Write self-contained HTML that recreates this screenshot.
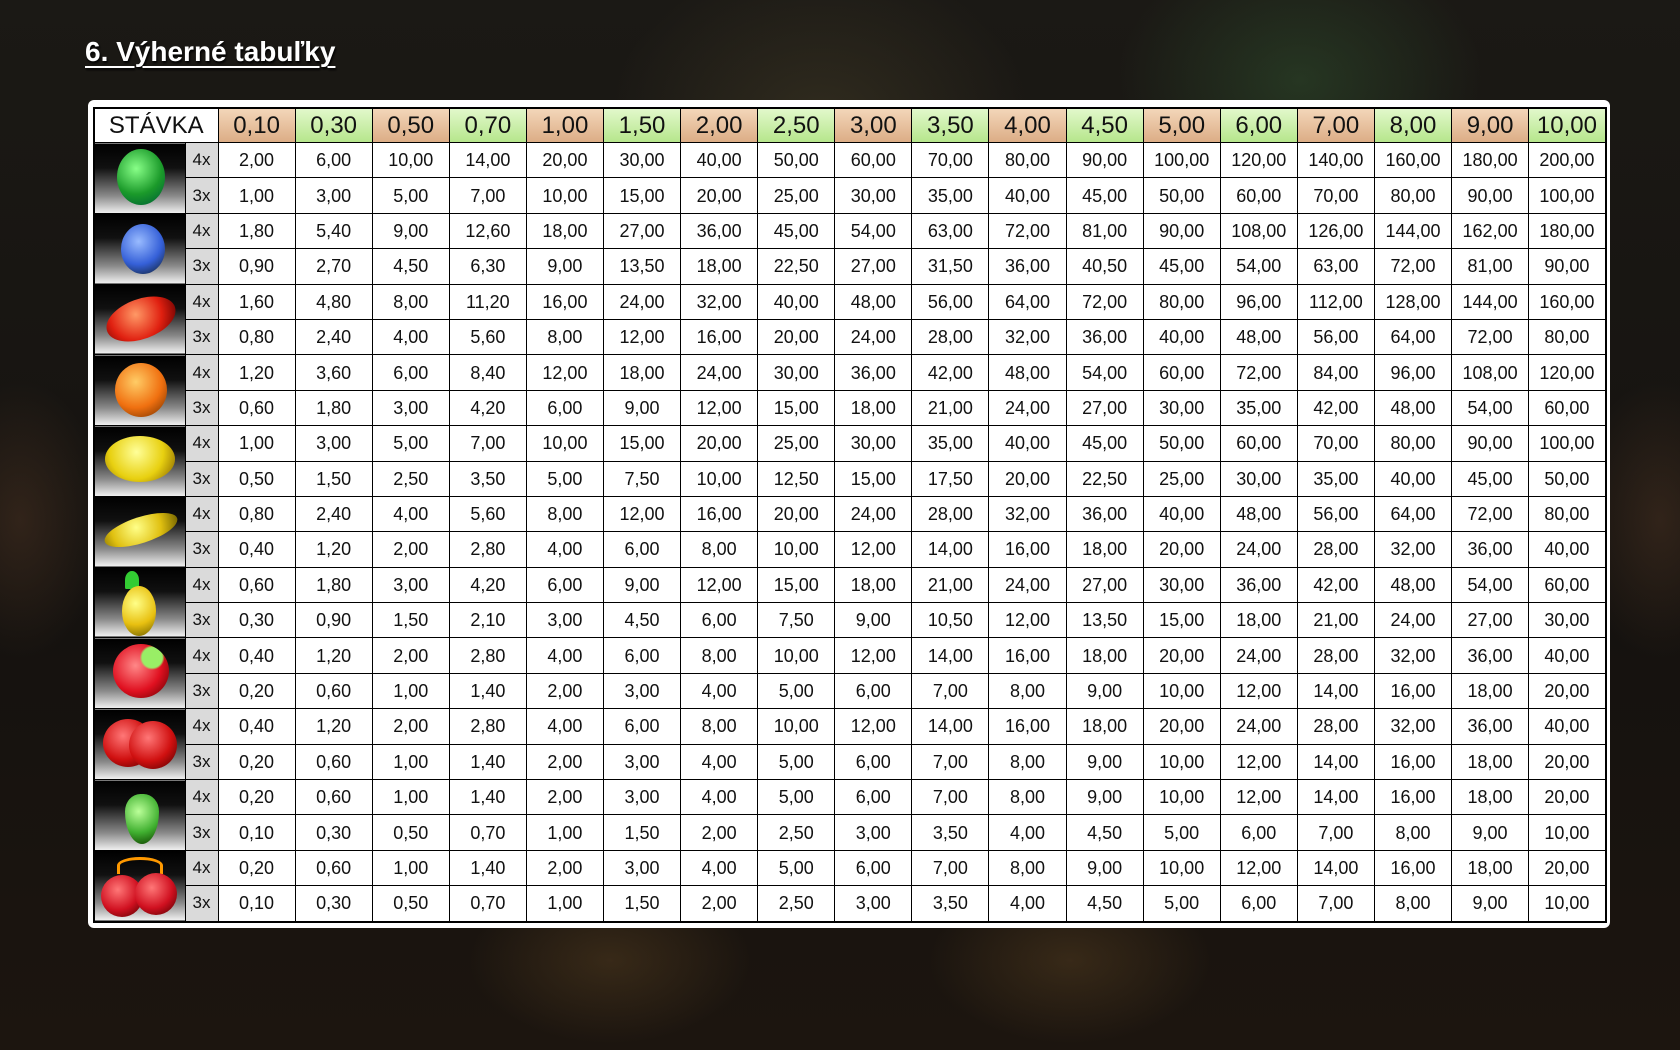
<!DOCTYPE html>
<html><head><meta charset="utf-8">
<style>
html,body{margin:0;padding:0}
body{width:1680px;height:1050px;overflow:hidden;position:relative;font-family:"Liberation Sans",sans-serif;
background:
radial-gradient(ellipse 260px 200px at 1300px 80px,rgba(60,110,60,.35),transparent 70%),
radial-gradient(ellipse 300px 230px at 820px 120px,rgba(90,80,50,.35),transparent 70%),
radial-gradient(ellipse 200px 120px at 610px 960px,rgba(110,80,40,.35),transparent 70%),
radial-gradient(ellipse 200px 120px at 1070px 960px,rgba(110,80,40,.35),transparent 70%),
radial-gradient(ellipse 120px 200px at 20px 520px,rgba(90,60,40,.4),transparent 70%),
radial-gradient(ellipse 120px 200px at 1660px 520px,rgba(90,60,40,.4),transparent 70%),
linear-gradient(#1b1915,#15120f 60%,#1c150f);}
.title{position:absolute;left:85px;top:36px;color:#fff;font-weight:bold;font-size:28px;text-decoration:underline;text-decoration-thickness:2px;text-underline-offset:5px;text-shadow:1px 2px 2px #000}
.panel{position:absolute;left:88px;top:100px;width:1522px;height:828px;background:#fff;border-radius:6px}
table{position:absolute;left:93px;top:107px;border-collapse:collapse;table-layout:fixed;width:1512px;border:2px solid #000}
td{border:1px solid #000;padding:0;text-align:center;font-size:18px;color:#111;height:34.4px;line-height:20px;white-space:nowrap;overflow:hidden}
tr.h td{height:33px;font-size:24px}
td.st{text-align:center;font-size:23px;background:#fff}
td.t{background:linear-gradient(#f3d6b9,#dcad86)}
td.g{background:linear-gradient(#e2f8cb,#b6e68c)}
td.m{background:#dadada;font-size:17px}
td.f{background:linear-gradient(#000 0%,#111 35%,#8a8a8a 75%,#f2f2f2);position:relative;padding:0}
.fr{position:absolute;border-radius:50%}
</style></head><body>
<div class="title">6. Výherné tabuľky</div>
<div class="panel"></div>
<table>
<colgroup><col style="width:91px"><col style="width:33px"><col span="18" style="width:77.1px"></colgroup>
<tr class="h"><td colspan="2" class="st">STÁVKA</td><td class="t">0,10</td><td class="g">0,30</td><td class="t">0,50</td><td class="g">0,70</td><td class="t">1,00</td><td class="g">1,50</td><td class="t">2,00</td><td class="g">2,50</td><td class="t">3,00</td><td class="g">3,50</td><td class="t">4,00</td><td class="g">4,50</td><td class="t">5,00</td><td class="g">6,00</td><td class="t">7,00</td><td class="g">8,00</td><td class="t">9,00</td><td class="g">10,00</td></tr>

<tr><td rowspan="2" class="f"><div class="fr" style="left:22px;top:6px;width:48px;height:56px;background:radial-gradient(circle at 40% 35%,#8f8,#1b9a2a 55%,#063 90%)"></div></td><td class="m">4x</td><td>2,00</td><td>6,00</td><td>10,00</td><td>14,00</td><td>20,00</td><td>30,00</td><td>40,00</td><td>50,00</td><td>60,00</td><td>70,00</td><td>80,00</td><td>90,00</td><td>100,00</td><td>120,00</td><td>140,00</td><td>160,00</td><td>180,00</td><td>200,00</td></tr>
<tr><td class="m">3x</td><td>1,00</td><td>3,00</td><td>5,00</td><td>7,00</td><td>10,00</td><td>15,00</td><td>20,00</td><td>25,00</td><td>30,00</td><td>35,00</td><td>40,00</td><td>45,00</td><td>50,00</td><td>60,00</td><td>70,00</td><td>80,00</td><td>90,00</td><td>100,00</td></tr>

<tr><td rowspan="2" class="f"><div class="fr" style="left:26px;top:10px;width:44px;height:50px;background:radial-gradient(circle at 40% 35%,#9bf,#3560d8 55%,#123 95%)"></div></td><td class="m">4x</td><td>1,80</td><td>5,40</td><td>9,00</td><td>12,60</td><td>18,00</td><td>27,00</td><td>36,00</td><td>45,00</td><td>54,00</td><td>63,00</td><td>72,00</td><td>81,00</td><td>90,00</td><td>108,00</td><td>126,00</td><td>144,00</td><td>162,00</td><td>180,00</td></tr>
<tr><td class="m">3x</td><td>0,90</td><td>2,70</td><td>4,50</td><td>6,30</td><td>9,00</td><td>13,50</td><td>18,00</td><td>22,50</td><td>27,00</td><td>31,50</td><td>36,00</td><td>40,50</td><td>45,00</td><td>54,00</td><td>63,00</td><td>72,00</td><td>81,00</td><td>90,00</td></tr>

<tr><td rowspan="2" class="f"><div class="fr" style="left:10px;top:14px;width:72px;height:40px;background:radial-gradient(circle at 45% 35%,#f96,#e02010 55%,#600 95%);transform:rotate(-20deg)"></div></td><td class="m">4x</td><td>1,60</td><td>4,80</td><td>8,00</td><td>11,20</td><td>16,00</td><td>24,00</td><td>32,00</td><td>40,00</td><td>48,00</td><td>56,00</td><td>64,00</td><td>72,00</td><td>80,00</td><td>96,00</td><td>112,00</td><td>128,00</td><td>144,00</td><td>160,00</td></tr>
<tr><td class="m">3x</td><td>0,80</td><td>2,40</td><td>4,00</td><td>5,60</td><td>8,00</td><td>12,00</td><td>16,00</td><td>20,00</td><td>24,00</td><td>28,00</td><td>32,00</td><td>36,00</td><td>40,00</td><td>48,00</td><td>56,00</td><td>64,00</td><td>72,00</td><td>80,00</td></tr>

<tr><td rowspan="2" class="f"><div class="fr" style="left:20px;top:8px;width:52px;height:54px;background:radial-gradient(circle at 40% 35%,#fc6,#f07010 55%,#730 95%)"></div></td><td class="m">4x</td><td>1,20</td><td>3,60</td><td>6,00</td><td>8,40</td><td>12,00</td><td>18,00</td><td>24,00</td><td>30,00</td><td>36,00</td><td>42,00</td><td>48,00</td><td>54,00</td><td>60,00</td><td>72,00</td><td>84,00</td><td>96,00</td><td>108,00</td><td>120,00</td></tr>
<tr><td class="m">3x</td><td>0,60</td><td>1,80</td><td>3,00</td><td>4,20</td><td>6,00</td><td>9,00</td><td>12,00</td><td>15,00</td><td>18,00</td><td>21,00</td><td>24,00</td><td>27,00</td><td>30,00</td><td>35,00</td><td>42,00</td><td>48,00</td><td>54,00</td><td>60,00</td></tr>

<tr><td rowspan="2" class="f"><div class="fr" style="left:10px;top:10px;width:70px;height:46px;background:radial-gradient(circle at 45% 35%,#ff9,#e8d010 55%,#860 95%)"></div></td><td class="m">4x</td><td>1,00</td><td>3,00</td><td>5,00</td><td>7,00</td><td>10,00</td><td>15,00</td><td>20,00</td><td>25,00</td><td>30,00</td><td>35,00</td><td>40,00</td><td>45,00</td><td>50,00</td><td>60,00</td><td>70,00</td><td>80,00</td><td>90,00</td><td>100,00</td></tr>
<tr><td class="m">3x</td><td>0,50</td><td>1,50</td><td>2,50</td><td>3,50</td><td>5,00</td><td>7,50</td><td>10,00</td><td>12,50</td><td>15,00</td><td>17,50</td><td>20,00</td><td>22,50</td><td>25,00</td><td>30,00</td><td>35,00</td><td>40,00</td><td>45,00</td><td>50,00</td></tr>

<tr><td rowspan="2" class="f"><div class="fr" style="left:8px;top:20px;width:76px;height:26px;background:radial-gradient(circle at 45% 35%,#ff8,#e0c010 55%,#760 95%);transform:rotate(-18deg)"></div></td><td class="m">4x</td><td>0,80</td><td>2,40</td><td>4,00</td><td>5,60</td><td>8,00</td><td>12,00</td><td>16,00</td><td>20,00</td><td>24,00</td><td>28,00</td><td>32,00</td><td>36,00</td><td>40,00</td><td>48,00</td><td>56,00</td><td>64,00</td><td>72,00</td><td>80,00</td></tr>
<tr><td class="m">3x</td><td>0,40</td><td>1,20</td><td>2,00</td><td>2,80</td><td>4,00</td><td>6,00</td><td>8,00</td><td>10,00</td><td>12,00</td><td>14,00</td><td>16,00</td><td>18,00</td><td>20,00</td><td>24,00</td><td>28,00</td><td>32,00</td><td>36,00</td><td>40,00</td></tr>

<tr><td rowspan="2" class="f"><div class="fr" style="left:30px;top:3px;width:14px;height:18px;background:#3c3;border-radius:50% 50% 10% 10%"></div><div class="fr" style="left:27px;top:18px;width:34px;height:50px;background:radial-gradient(circle at 40% 35%,#ff8,#e8c010 55%,#760 95%)"></div></td><td class="m">4x</td><td>0,60</td><td>1,80</td><td>3,00</td><td>4,20</td><td>6,00</td><td>9,00</td><td>12,00</td><td>15,00</td><td>18,00</td><td>21,00</td><td>24,00</td><td>27,00</td><td>30,00</td><td>36,00</td><td>42,00</td><td>48,00</td><td>54,00</td><td>60,00</td></tr>
<tr><td class="m">3x</td><td>0,30</td><td>0,90</td><td>1,50</td><td>2,10</td><td>3,00</td><td>4,50</td><td>6,00</td><td>7,50</td><td>9,00</td><td>10,50</td><td>12,00</td><td>13,50</td><td>15,00</td><td>18,00</td><td>21,00</td><td>24,00</td><td>27,00</td><td>30,00</td></tr>

<tr><td rowspan="2" class="f"><div class="fr" style="left:18px;top:6px;width:56px;height:54px;background:radial-gradient(circle at 70% 25%,#9e6 0,#9e6 18%,transparent 22%),radial-gradient(circle at 40% 40%,#f88,#e01020 55%,#600 95%)"></div></td><td class="m">4x</td><td>0,40</td><td>1,20</td><td>2,00</td><td>2,80</td><td>4,00</td><td>6,00</td><td>8,00</td><td>10,00</td><td>12,00</td><td>14,00</td><td>16,00</td><td>18,00</td><td>20,00</td><td>24,00</td><td>28,00</td><td>32,00</td><td>36,00</td><td>40,00</td></tr>
<tr><td class="m">3x</td><td>0,20</td><td>0,60</td><td>1,00</td><td>1,40</td><td>2,00</td><td>3,00</td><td>4,00</td><td>5,00</td><td>6,00</td><td>7,00</td><td>8,00</td><td>9,00</td><td>10,00</td><td>12,00</td><td>14,00</td><td>16,00</td><td>18,00</td><td>20,00</td></tr>

<tr><td rowspan="2" class="f"><div class="fr" style="left:8px;top:10px;width:50px;height:48px;background:radial-gradient(circle at 40% 35%,#f77,#d01010 55%,#500 95%)"></div><div class="fr" style="left:34px;top:12px;width:48px;height:48px;background:radial-gradient(circle at 40% 35%,#f77,#d01010 55%,#500 95%)"></div></td><td class="m">4x</td><td>0,40</td><td>1,20</td><td>2,00</td><td>2,80</td><td>4,00</td><td>6,00</td><td>8,00</td><td>10,00</td><td>12,00</td><td>14,00</td><td>16,00</td><td>18,00</td><td>20,00</td><td>24,00</td><td>28,00</td><td>32,00</td><td>36,00</td><td>40,00</td></tr>
<tr><td class="m">3x</td><td>0,20</td><td>0,60</td><td>1,00</td><td>1,40</td><td>2,00</td><td>3,00</td><td>4,00</td><td>5,00</td><td>6,00</td><td>7,00</td><td>8,00</td><td>9,00</td><td>10,00</td><td>12,00</td><td>14,00</td><td>16,00</td><td>18,00</td><td>20,00</td></tr>

<tr><td rowspan="2" class="f"><div class="fr" style="left:30px;top:14px;width:34px;height:50px;background:radial-gradient(circle at 40% 35%,#bf9,#40b030 55%,#140 95%);border-radius:45% 45% 50% 50%/35% 35% 65% 65%"></div></td><td class="m">4x</td><td>0,20</td><td>0,60</td><td>1,00</td><td>1,40</td><td>2,00</td><td>3,00</td><td>4,00</td><td>5,00</td><td>6,00</td><td>7,00</td><td>8,00</td><td>9,00</td><td>10,00</td><td>12,00</td><td>14,00</td><td>16,00</td><td>18,00</td><td>20,00</td></tr>
<tr><td class="m">3x</td><td>0,10</td><td>0,30</td><td>0,50</td><td>0,70</td><td>1,00</td><td>1,50</td><td>2,00</td><td>2,50</td><td>3,00</td><td>3,50</td><td>4,00</td><td>4,50</td><td>5,00</td><td>6,00</td><td>7,00</td><td>8,00</td><td>9,00</td><td>10,00</td></tr>

<tr><td rowspan="2" class="f"><div class="fr" style="left:22px;top:6px;width:40px;height:14px;border:3px solid #f90;border-bottom:none;background:transparent;border-radius:50% 50% 0 0"></div><div class="fr" style="left:6px;top:24px;width:42px;height:42px;background:radial-gradient(circle at 40% 35%,#f77,#d01020 55%,#500 95%)"></div><div class="fr" style="left:40px;top:22px;width:42px;height:42px;background:radial-gradient(circle at 40% 35%,#f77,#d01020 55%,#500 95%)"></div></td><td class="m">4x</td><td>0,20</td><td>0,60</td><td>1,00</td><td>1,40</td><td>2,00</td><td>3,00</td><td>4,00</td><td>5,00</td><td>6,00</td><td>7,00</td><td>8,00</td><td>9,00</td><td>10,00</td><td>12,00</td><td>14,00</td><td>16,00</td><td>18,00</td><td>20,00</td></tr>
<tr><td class="m">3x</td><td>0,10</td><td>0,30</td><td>0,50</td><td>0,70</td><td>1,00</td><td>1,50</td><td>2,00</td><td>2,50</td><td>3,00</td><td>3,50</td><td>4,00</td><td>4,50</td><td>5,00</td><td>6,00</td><td>7,00</td><td>8,00</td><td>9,00</td><td>10,00</td></tr>
</table>
</body></html>
